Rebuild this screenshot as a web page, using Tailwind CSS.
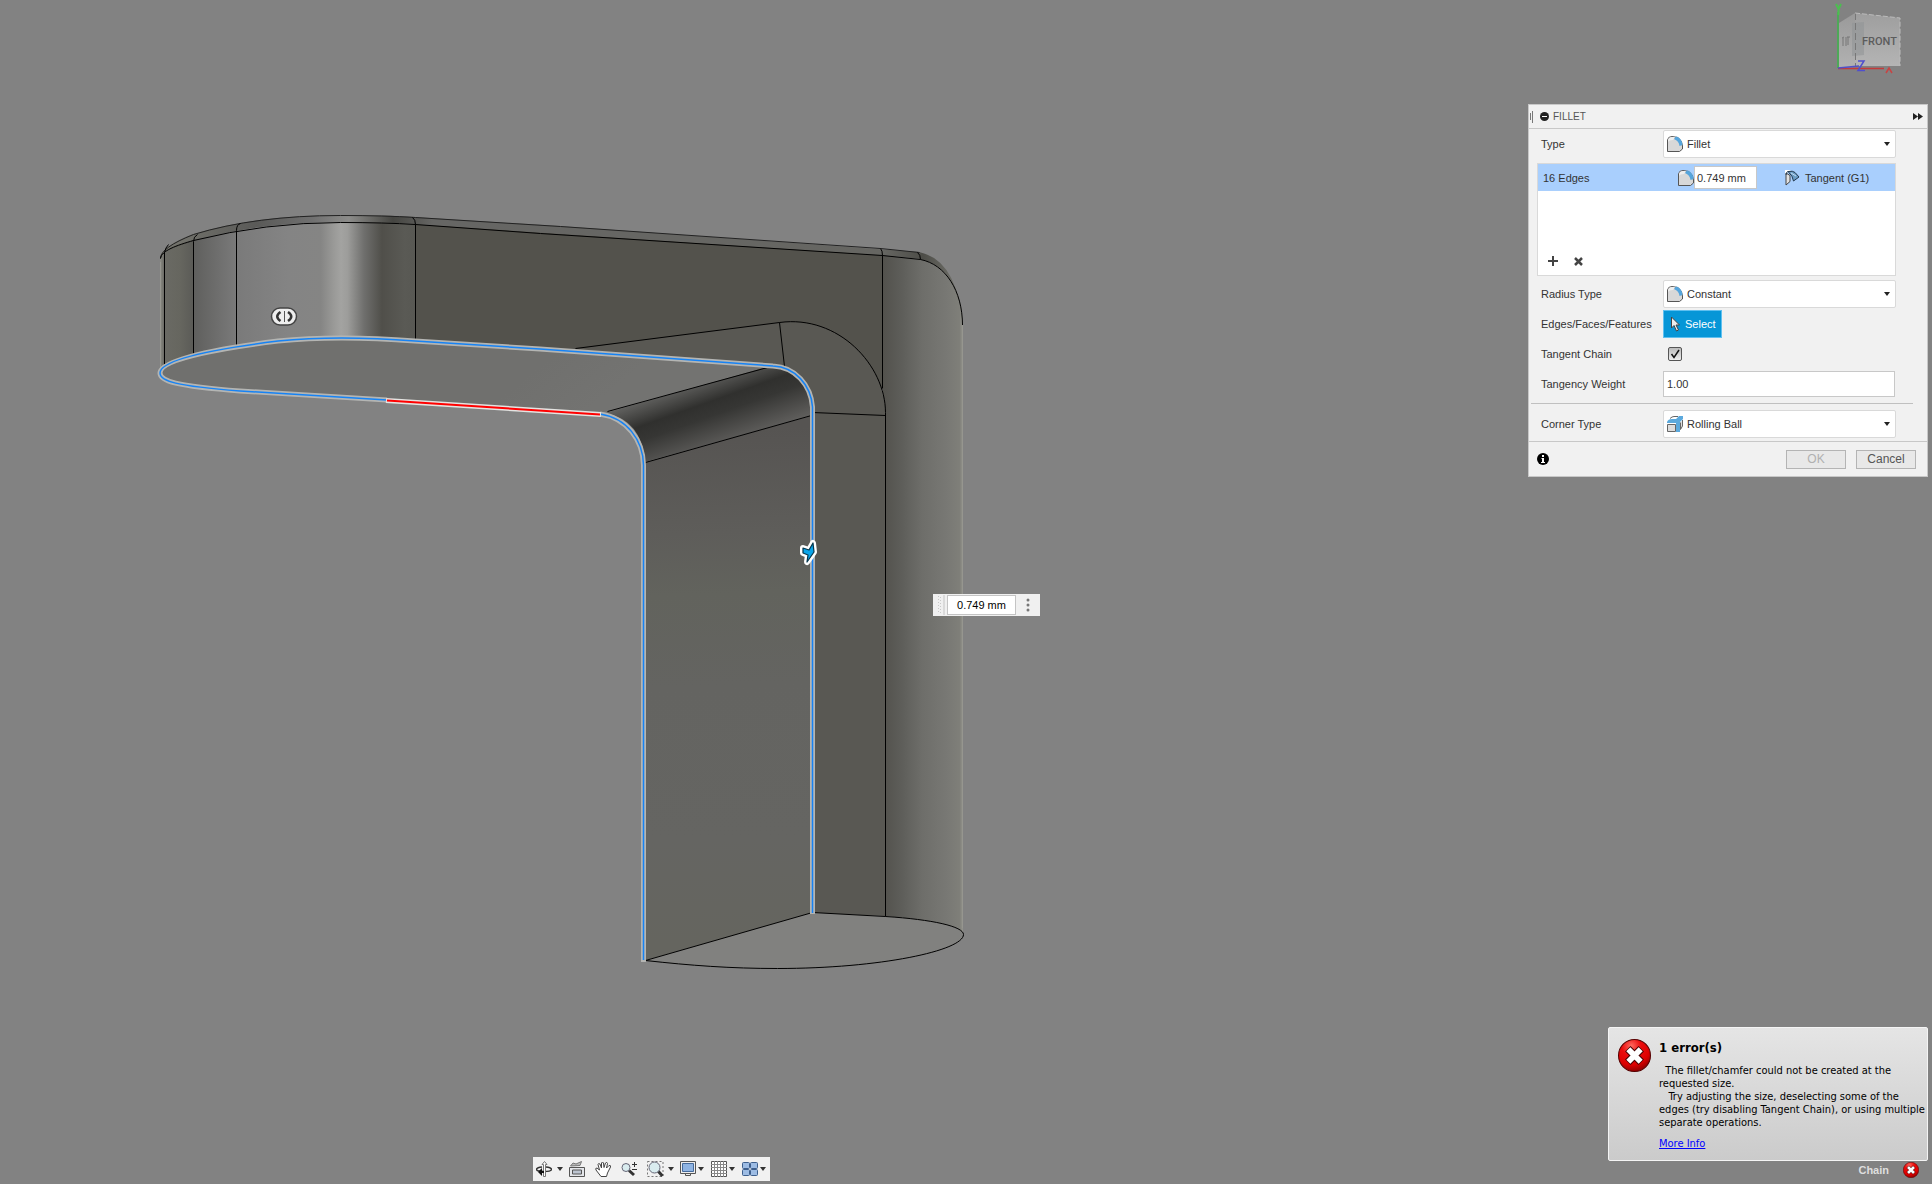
<!DOCTYPE html>
<html lang="en">
<head>
<meta charset="utf-8">
<title>Fillet</title>
<script src="https://cdn.jsdelivr.net/npm/@tailwindcss/browser@4"></script>
</head>
<body class="bg-[#828282]">
<main class="relative flex min-h-screen flex-col overflow-hidden bg-[#828282] font-['Liberation_Sans',Arial,sans-serif] text-[11px] leading-4 text-[#333]">

  <!-- Model canvas -->
  <svg class="absolute top-0 left-0" width="1100" height="1100" viewBox="0 0 1100 1100" fill="none" aria-label="Model view">
    <defs>
      <linearGradient id="side" gradientUnits="userSpaceOnUse" x1="160" y1="0" x2="415" y2="0">
        <stop offset="0" stop-color="#8d8d86"/><stop offset=".016" stop-color="#6a6a64"/><stop offset=".08" stop-color="#66665f"/><stop offset=".13" stop-color="#5b5b57"/><stop offset=".131" stop-color="#5f5f5d"/><stop offset=".3" stop-color="#7a7a7a"/><stop offset=".5" stop-color="#848484"/><stop offset=".63" stop-color="#858584"/><stop offset=".68" stop-color="#999997"/><stop offset=".71" stop-color="#a3a3a1"/><stop offset=".735" stop-color="#9d9d9b"/><stop offset=".8" stop-color="#6f6f6d"/><stop offset=".87" stop-color="#504f4a"/><stop offset=".96" stop-color="#5a5a55"/><stop offset="1" stop-color="#585853"/>
      </linearGradient>
      <linearGradient id="col" gradientUnits="userSpaceOnUse" x1="882" y1="0" x2="963" y2="0">
        <stop offset="0" stop-color="#52514c"/><stop offset=".25" stop-color="#5e5e5a"/><stop offset=".5" stop-color="#6e6e6a"/><stop offset=".8" stop-color="#787874"/><stop offset=".96" stop-color="#7f7f79"/><stop offset="1" stop-color="#95958e"/>
      </linearGradient>
      <linearGradient id="rim" gradientUnits="userSpaceOnUse" x1="160" y1="0" x2="963" y2="0">
        <stop offset="0" stop-color="#77776f"/><stop offset=".12" stop-color="#5a5a58"/><stop offset=".19" stop-color="#707070"/><stop offset=".235" stop-color="#8c8c8a"/><stop offset=".29" stop-color="#454541"/><stop offset=".34" stop-color="#666664"/><stop offset=".9" stop-color="#666662"/><stop offset=".95" stop-color="#4d4d48"/><stop offset="1" stop-color="#777770"/>
      </linearGradient>
      <linearGradient id="bend" gradientUnits="userSpaceOnUse" x1="685" y1="385" x2="708" y2="450">
        <stop offset="0" stop-color="#626260"/><stop offset=".35" stop-color="#30302e"/><stop offset=".55" stop-color="#363634"/><stop offset="1" stop-color="#5e5d5b"/>
      </linearGradient>
      <linearGradient id="wall" gradientUnits="userSpaceOnUse" x1="720" y1="430" x2="740" y2="940">
        <stop offset="0" stop-color="#565452"/><stop offset=".2" stop-color="#5e5d5a"/><stop offset=".32" stop-color="#62635d"/><stop offset=".5" stop-color="#646461"/><stop offset=".8" stop-color="#656562"/><stop offset="1" stop-color="#65655f"/>
      </linearGradient>
      <linearGradient id="under" gradientUnits="userSpaceOnUse" x1="560" y1="350" x2="600" y2="400">
        <stop offset="0" stop-color="#70706e"/><stop offset="1" stop-color="#737371"/>
      </linearGradient>
    </defs>
    <path fill="url(#rim)" d="M160 258Q160 247 193 234Q255 215 340 215Q385 215 415 217L560 226L919 252Q958 260 963 327L920 259L882 255L415 224Q340 220 280 225T165 251Z"/>
    <path fill="url(#side)" d="M160 258Q163 247 193 240Q265 222 340 222Q385 222 415 224V342Q337 335 278 341T160 373Z"/>
    <path fill="#53524c" d="M415 224L882 255V390L812 400L773 366L415 342Z"/>
    <path fill="url(#col)" d="M882 255L920 259C945 264 963 290 963 325V933Q960 923 885 916Z"/>
    <path fill="#595853" d="M575 349L779 322C838 314 885 365 885 412V916L812 913V407C811 385 795 367 773 366Z"/>
    <path fill="url(#under)" d="M160 373C160 362 190 355 237 346Q320 333 415 341L773 366L605 413L387 400L240 391C190 387 160 381 160 373Z"/>
    <path fill="url(#bend)" d="M767 367Q811 367 811 416L645 462Q642 420 605 413Z"/>
    <path fill="url(#wall)" d="M645 462L811 416V913L643 961Z"/>
    <g transform="translate(.5 .5)" stroke="#000" stroke-width="1">
      <path fill="#81817f" d="M645 960L812 912L885 916C932 919 963 926 963 934C963 950 880 968 777 968C730 968 690 965 645 960Z"/>
      <path stroke="#222" d="M160 258Q160 247 193 234Q255 215 340 215Q385 215 415 217L560 226L880 248L919 252"/>
      <path d="M160 258C161 250 176 245 193 240Q265 222 340 222Q385 222 415 224L540 233L882 255L920 259C945 264 962 290 962 325"/>
      <path d="M164 364V252Q165 247 168 244M193 355V241Q193 236 197 234M236 346V230Q236 224 240 223M415 341V224Q415 219 412 217M882 388V255Q882 250 880 248M920 259Q920 254 917 252"/>
      <path d="M575 348L779 322C838 314 885 365 885 412V916M779 322L784 366M812 412L885 415M607 411L767 367M645 462L811 415"/>
    </g>
    <path stroke="#96968f" d="M962.500 325V928M160.500 262V368"/>
    <g stroke-linejoin="round">
      <path stroke="#b4b5b3" stroke-width="5" d="M812.500 914V407C811 385 795 367 773 366L540 349L415 341Q337 335 278 341C230 347 160 358 160 373C160 381 175 386 240 391L387 400M600 414C627 418 643 440 643.500 465V962"/>
      <path stroke="#1683f5" stroke-width="1.500" d="M812.500 913V407C811 385 795 367 773 366L540 349L415 341Q337 335 278 341C230 347 160 358 160 373C160 381 175 386 240 391L387 400M600 414C627 418 643 440 643.500 465V960"/>
      <path stroke="#e4e4e2" stroke-width="5" d="M386 400.500L601 414.500"/>
      <path stroke="#f00" stroke-width="2" d="M387 400.500L600 414.500"/>
    </g>
    <rect x="271.500" y="308" width="25" height="17" rx="8.500" fill="#eee" stroke="#444" stroke-width="1.500"/>
    <path stroke="#333" stroke-width="2.500" d="M280.500 312Q274 316.500 280.500 321M288 312Q294.500 316.500 288 321"/>
    <path stroke="#555" d="M284.500 311V322"/>
    <path stroke="#fff" stroke-width="6" stroke-linejoin="round" d="M803 548L809 550L813 543L814 552L807 562L808 555L803 553Z"/>
    <path fill="#0aa5ea" stroke="#06384f" stroke-width="1.250" stroke-linejoin="round" d="M803 548L809 550L813 543L814 552L807 562L808 555L803 553Z"/>
  </svg>

  <!-- Value editor pinned to the selected edge -->
  <div class="absolute top-[594px] left-[933px] flex h-[22px] w-[107px] items-center bg-[#f0f0f0]">
    <svg class="h-[22px] w-3.5" viewBox="0 0 14 22" fill="none"><path stroke="#c8c8c8" stroke-dasharray="1 2" d="M5.500 2V20M7.500 3V21"/><path stroke="#dadada" stroke-width="2" d="M11 1V21"/></svg>
    <input aria-label="Radius" class="h-5 w-[69px] border border-[#c4c4c4] bg-white text-center text-[11px] text-black" value="0.749 mm">
    <button aria-label="More" class="flex h-full flex-1 items-center justify-center"><svg width="4" height="14" fill="#777"><circle cx="2" cy="2" r="1.500"/><circle cx="2" cy="7" r="1.500"/><circle cx="2" cy="12" r="1.500"/></svg></button>
  </div>

  <!-- View cube -->
  <div class="relative flex h-[104px] justify-end pr-2">
    <svg width="104" height="80" viewBox="0 0 104 80" fill="none" aria-label="View cube">
      <defs>
        <linearGradient id="cf" x1="0" y1="0" x2="0" y2="1"><stop stop-color="#9e9e9e"/><stop offset="1" stop-color="#b4b4b4"/></linearGradient>
        <linearGradient id="cl" x1="0" y1="0" x2="0" y2="1"><stop stop-color="#999"/><stop offset="1" stop-color="#b2b2b2"/></linearGradient>
      </defs>
      <path fill="url(#cl)" d="M19 23L35 13V67L19 68Z"/>
      <path fill="url(#cf)" d="M35 13L80 18V66L35 66Z"/>
      <path fill="#8f9396" fill-opacity=".55" d="M32 23L44 22V55L32 56Z"/>
      <path stroke="#777" stroke-dasharray="7 3" d="M35.500 13V66"/>
      <path stroke="#bbb" stroke-dasharray="5 2" d="M35 13L80 18V66"/>
      <text x="42" y="45" font-family="Roboto, sans-serif" font-weight="500" font-size="11" fill="#5c5c5c">FRONT</text>
      <path stroke="#777" d="M23 38V46M26 37V46M22 38L24 37M28 37V45M27 37H30"/>
      <path stroke="#3cb44a" stroke-width="1.500" d="M18 68V12"/>
      <path stroke="#4bbf4f" stroke-width="2" d="M16 4L18.500 9L21 4M18.500 9V15"/>
      <path stroke="#c43a3a" stroke-width="1.500" d="M18 68.500H64"/>
      <path stroke="#5050c8" stroke-width="1.500" d="M18 68L39 66"/>
      <path stroke="#4f4fcf" stroke-width="1.500" d="M38 61H44L38 70.500H45"/>
      <path stroke="#c84444" stroke-width="1.500" d="M66 73L69 68L72 73"/>
    </svg>
  </div>

  <!-- Fillet dialog -->
  <form class="relative mr-1 flex w-[400px] flex-col self-end border border-[#c8c8c8] bg-[#f1f1f1]">
    <header class="flex h-6 items-center border-b border-[#c8c8c8] pr-1 pl-px">
      <svg class="mr-1.5" width="4" height="12" stroke="#777"><path d="M.5 2V9M2.500 0V12"/></svg>
      <button type="button" aria-label="Collapse" class="mr-1"><svg width="9" height="9"><circle cx="4.500" cy="4.500" r="4.500" fill="#222"/><path stroke="#fff" d="M2 4.500H7"/></svg></button>
      <h1 class="text-[10px] text-[#555]">FILLET</h1>
      <button type="button" aria-label="Dock" class="ml-auto"><svg width="10" height="7" fill="#222"><path d="M0 0L5 3.500L0 7ZM5 0L10 3.500L5 7Z"/></svg></button>
    </header>

    <div class="flex h-[30px] items-center pl-3">
      <label for="type" class="w-[122px]">Type</label>
      <div class="relative w-[233px]">
        <select id="type" class="h-7 w-full appearance-none rounded-xs border border-[#d9d9d9] bg-white pl-[23px]"><option>Fillet</option></select>
        <svg class="pointer-events-none absolute top-1.5 left-1" width="16" height="16"><use href="#fillet-icon"/></svg>
        <svg class="pointer-events-none absolute top-3 right-1.5" width="6" height="4" fill="#222"><path d="M0 0H6L3 4Z"/></svg>
      </div>
    </div>

    <section class="mt-1 ml-2 flex h-[113px] w-[359px] flex-col border border-[#d9d9d9] bg-white">
      <div class="flex h-[27px] items-center bg-[#a9cffd] pl-[5px]">
        <span class="w-[135px]">16 Edges</span>
        <svg width="16" height="16"><use href="#fillet-icon"/></svg>
        <input aria-label="Edge radius" class="h-[23px] w-[63px] border border-[#c8c8c8] bg-white pl-0.5" value="0.749 mm">
        <svg class="ml-7" width="15" height="16" viewBox="0 0 15 16" fill="none"><path fill="#fff" d="M0 0H6L0 5Z"/><path fill="#e2e2e2" stroke="#444" d="M1 3L5 5.500V11.500L1 15Z"/><path fill="#6a9cc4" stroke="#23394e" d="M3 1.500Q8 .5 10 2.500L14 7L8.500 11Q8 6 3 1.500Z"/><path stroke="#c4dcf0" d="M6 3L11 6"/><path stroke="#23394e" d="M3 1.500Q1 2 1 5"/></svg>
        <span class="ml-[5px]">Tangent (G1)</span>
      </div>
      <div class="mt-auto flex h-7 items-center gap-4 pl-2.5">
        <button type="button" aria-label="Add"><svg width="10" height="10" stroke="#444" stroke-width="2"><path d="M5 0V10M0 5H10"/></svg></button>
        <button type="button" aria-label="Remove"><svg width="9" height="9" stroke="#444" stroke-width="2.500"><path d="M1 1L8 8M8 1L1 8"/></svg></button>
      </div>
    </section>

    <div class="mt-[3px] flex h-[30px] items-center pl-3">
      <label for="radius" class="w-[122px]">Radius Type</label>
      <div class="relative w-[233px]">
        <select id="radius" class="h-7 w-full appearance-none rounded-xs border border-[#d9d9d9] bg-white pl-[23px]"><option>Constant</option></select>
        <svg class="pointer-events-none absolute top-1.5 left-1" width="16" height="16"><use href="#fillet-icon"/></svg>
        <svg class="pointer-events-none absolute top-3 right-1.5" width="6" height="4" fill="#222"><path d="M0 0H6L3 4Z"/></svg>
      </div>
    </div>
    <div class="flex h-[30px] items-center pl-3">
      <label for="select" class="w-[122px]">Edges/Faces/Features</label>
      <button type="button" id="select" class="flex h-7 w-[59px] items-center gap-1 border border-[#5fc0f0] bg-[#0696d7] pl-1.5 text-white"><svg width="11" height="16" fill="#eee" stroke="#444"><path d="M1.500 1V12L4 9.500L6.500 15L8.500 14L6 9H9.500Z"/></svg>Select</button>
    </div>
    <div class="flex h-[30px] items-center pl-3">
      <label for="chain" class="w-[127px]">Tangent Chain</label>
      <span class="relative h-3.5 w-3.5">
        <input id="chain" type="checkbox" checked class="block h-3.5 w-3.5 appearance-none rounded-xs border border-[#555] bg-linear-to-b from-[#bbb] to-[#eee]">
        <svg class="pointer-events-none absolute top-0 left-0" width="14" height="14" fill="none" stroke="#111" stroke-width="1.500"><path d="M3.500 7L6 10.500L11 3"/></svg>
      </span>
    </div>
    <div class="flex h-[30px] items-center pl-3">
      <label for="weight" class="w-[122px]">Tangency Weight</label>
      <input id="weight" class="h-[26px] w-[232px] border border-[#c8c8c8] bg-white pl-[3px]" value="1.00">
    </div>
    <hr class="mt-1 mr-3.5 ml-0.5 border-[#c0c0c0]">
    <div class="mt-[5px] mb-0.5 flex h-[30px] items-center pl-3">
      <label for="corner" class="w-[122px]">Corner Type</label>
      <div class="relative w-[233px]">
        <select id="corner" class="h-7 w-full appearance-none rounded-xs border border-[#d9d9d9] bg-white pl-[23px]"><option>Rolling Ball</option></select>
        <svg class="pointer-events-none absolute top-1.5 left-1" width="17" height="16" fill="none"><path fill="#ddd" stroke="#666" d="M.5 8.500H8.500V15.500H.5ZM13.500 6.500V13.500L15.500 10V4"/><path stroke="#666" d="M3 2.500Q5 .5 7 .5H11"/><path fill="#5ba9dd" d="M0 6Q1 3 5 3H9L12 0H16V3L13 6V16H9V7H0Z"/></svg>
        <svg class="pointer-events-none absolute top-3 right-1.5" width="6" height="4" fill="#222"><path d="M0 0H6L3 4Z"/></svg>
      </div>
    </div>
    <footer class="flex h-[35px] items-center gap-2.5 border-t border-[#c8c8c8] pr-[11px] pl-2 text-xs">
      <button type="button" aria-label="Info" class="mr-auto"><svg width="12" height="12"><circle cx="6" cy="6" r="6" fill="#000"/><path fill="#fff" d="M5 2H7V4H5ZM4.500 5H7V9H8V10H4V9H5V6H4.500Z"/></svg></button>
      <button type="button" disabled class="h-[19px] w-[60px] border border-[#b4b4b4] bg-[#e8e8e8] leading-[17px] text-[#b0b0b0]">OK</button>
      <button type="button" class="h-[19px] w-[60px] border border-[#b4b4b4] bg-[#e8e8e8] leading-[17px] text-[#555]">Cancel</button>
    </footer>
  </form>

  <!-- Navigation bar and status -->
  <div class="relative mt-auto flex items-end justify-between pr-1">
    <nav aria-label="Navigation" class="mb-[3px] ml-[533px] flex h-6 w-[237px] items-center bg-[#f1f1f1] pl-[3px]">
      <button aria-label="Orbit" class="flex w-[33px] items-center gap-[5px]"><svg width="16" height="16" fill="none" stroke="#333"><path stroke-width="1.500" d="M6 6Q.5 6.500 .5 8.500Q1 10.500 8 10.500Q15.500 10.500 15.500 8.500Q15.500 6.500 10 6"/><path fill="#fff" stroke="#777" d="M7.500 15.500V3.500H6L8.500 .5L11 3.500H9.500V15.500Z"/><path fill="#111" stroke="none" d="M6 7L2 11L6 15V12H8V10H6Z"/></svg><svg width="6" height="4" fill="#333"><path d="M0 0H6L3 4Z"/></svg></button>
      <button aria-label="Look at" class="w-[26px]"><svg width="16" height="16" fill="none" stroke="#555"><path fill="#e4e6ea" d="M.5 6.500H15.500V15.500H.5Z"/><path fill="#bcc4d0" d="M3.500 9H12.500V13H3.500Z"/><path fill="#bbb" stroke="#777" d="M1.500 5L4 2L7 3L12.500 .5L11 4.500Z"/></svg></button>
      <button aria-label="Pan" class="w-[26px]"><svg width="17" height="16" fill="#fff" stroke="#444"><path d="M6 15.500L1 9Q0 7 2 7L4.500 9L3 3.500Q3 2 5 3L6.500 7L6.500 2Q7.500 0 8.500 2L9 6.500L10.500 2Q12 .5 12.500 2.500L11.500 7L14 4.500Q16 4 15.500 6L12.500 12L11.500 15.500Z"/></svg></button>
      <button aria-label="Zoom" class="w-[26px]"><svg width="17" height="16" fill="none"><path stroke="#333" stroke-width="3" d="M8 9.500L13 14"/><circle cx="5" cy="6.500" r="4" fill="#d9ecef" stroke="#667"/><path stroke="#333" d="M11 3.500H16M13.500 1V6M11 8.500H16"/></svg></button>
      <button aria-label="Fit" class="flex w-[33px] items-center gap-1"><svg width="17" height="16" fill="none"><path stroke="#777" stroke-dasharray="2 2" d="M.5 .5H16V15.500H.5Z"/><path stroke="#333" stroke-width="3" d="M11 10L15.500 15"/><circle cx="7.500" cy="6.500" r="5.500" fill="#d9ecef" stroke="#667"/></svg><svg width="6" height="4" fill="#333"><path d="M0 0H6L3 4Z"/></svg></button>
      <button aria-label="Display settings" class="flex w-[31px] items-center gap-0.5"><svg width="16" height="16" fill="none" stroke="#555"><path fill="#eee" d="M.5 .5H15.500V12.500H.5Z"/><path fill="#8fb4e3" stroke="#456a9c" d="M2.500 2.500H13.500V10.500H2.500Z"/><path fill="#eee" d="M5.500 12.500V14.500H10.500V12.500Z"/></svg><svg width="6" height="4" fill="#333"><path d="M0 0H6L3 4Z"/></svg></button>
      <button aria-label="Grid and snaps" class="flex w-[31px] items-center gap-0.5"><svg width="16" height="16" fill="none" stroke="#888"><path fill="#fff" stroke="#555" d="M.5 .5H15.500V15.500H.5Z"/><path d="M3.500 0V16M6.500 0V16M9.500 0V16M12.500 0V16M0 3.500H16M0 6.500H16M0 9.500H16M0 12.500H16"/></svg><svg width="6" height="4" fill="#333"><path d="M0 0H6L3 4Z"/></svg></button>
      <button aria-label="Viewports" class="flex items-center gap-0.5"><svg width="16" height="14" fill="#9dbce4" stroke="#3d5f8d"><rect x=".5" y=".5" width="7" height="6" rx="1"/><rect x="8.500" y=".5" width="7" height="6" rx="1"/><rect x=".5" y="7.500" width="7" height="6" rx="1"/><rect x="8.500" y="7.500" width="7" height="6" rx="1"/></svg><svg width="6" height="4" fill="#333"><path d="M0 0H6L3 4Z"/></svg></button>
    </nav>

    <div class="flex flex-col pb-1.5">
      <div role="alert" class="flex h-[134px] w-80 rounded-xs border border-[#f4f4f4] bg-linear-to-b from-[#e5e5e5] to-[#cbcbcb] pt-[11px] pl-[9px] font-['DejaVu_Sans_Condensed','DejaVu_Sans',sans-serif] text-[11px] leading-[13px] text-black">
        <svg class="mr-2 shrink-0" width="33" height="33" viewBox="0 0 32 32"><use href="#error-icon"/></svg>
        <div>
          <h2 class="text-[13px] leading-[18px] font-bold">1 error(s)</h2>
          <p class="mt-[7px] whitespace-pre">  The fillet/chamfer could not be created at the
requested size.
   Try adjusting the size, deselecting some of the
edges (try disabling Tangent Chain), or using multiple
separate operations.</p>
          <a href="#" class="mt-2 block text-[#00f] underline">More Info</a>
        </div>
      </div>
      <div class="flex h-[17px] items-center justify-end gap-[14px] pr-[9px] text-[#dedede]"><span class="font-bold">Chain</span><svg width="16" height="16" viewBox="0 0 32 32"><use href="#error-icon"/></svg></div>
    </div>
  </div>
</main>

<!-- Shared icons -->
<svg class="absolute h-0 w-0" aria-hidden="true">
  <defs><radialGradient id="red" cx=".4" cy=".2" r=".85"><stop stop-color="#ff6a60"/><stop offset=".35" stop-color="#ea0d0d"/><stop offset=".7" stop-color="#d00"/><stop offset="1" stop-color="#800000"/></radialGradient></defs>
  <symbol id="fillet-icon" viewBox="0 0 16 16"><path fill="#d8d8d8" stroke="#555" d="M.5 15.500V4Q1 .5 5 .5L11 1.500Q15.500 5 15.500 10V13L12.500 15.500Z"/><path fill="#eee" d="M1 6Q2 4 6 4L8 1H5Q1.500 1 1 4Z"/><path fill="#55a5dc" d="M7 3L9 .5Q15 2 15.500 9L12.500 10Q12 5 7 3Z"/></symbol>
  <symbol id="error-icon" viewBox="0 0 32 32"><circle cx="16" cy="16" r="15.500" fill="url(#red)" stroke="#500"/><path stroke="#400" stroke-width="7.500" d="M9.500 9.500L22.500 22.500M22.500 9.500L9.500 22.500"/><path stroke="#fff" stroke-width="5.500" d="M10 10L22 22M22 10L10 22"/></symbol>
</svg>
</body>
</html>
